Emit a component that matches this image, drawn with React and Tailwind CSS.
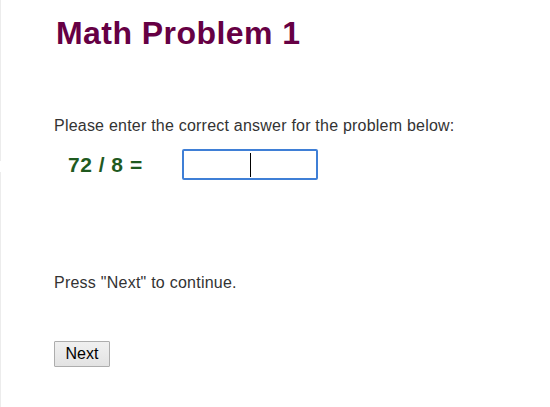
export default function App() {
  return (
    <div className="flex min-h-[407px] w-[550px] bg-white font-['Liberation_Sans',Arial,sans-serif]">
      <div className="flex w-px flex-col">
        <div className="h-[161px] bg-[#ececec]" />
        <div className="h-[11px]" />
        <div className="flex-1 bg-[#ececec]" />
      </div>
      <div className="flex flex-col pl-[53px]">
        <h1 className="mt-[15px] pl-[2px] text-[32px] leading-[37px] font-bold tracking-[0.45px] text-[#660044]">Math Problem 1</h1>
        <p className="mt-[65px] text-[16px] leading-[18px] tracking-[0.22px] text-[#333333]">
          Please enter the correct answer for the problem below:
        </p>
        <div className="mt-[14px] flex items-center">
          <span className="ml-[14px] w-[114px] text-[21px] leading-[24px] font-bold tracking-[0.5px] text-[#1f5a1f]">72 / 8 =</span>
          <div className="flex h-[31px] w-[136px] items-center justify-center rounded-[2px] border-2 border-[#3f7fd6] bg-white">
            <div className="h-[24px] w-px bg-black" />
          </div>
        </div>
        <p className="mt-[94px] text-[16px] leading-[18px] tracking-[0.24px] text-[#333333]">Press "Next" to continue.</p>
        <div className="mt-[49px]">
          <button className="h-[26px] w-[56px] rounded-[1px] border border-[#adadad] bg-gradient-to-b from-[#f0f0f0] to-[#e3e3e3] text-[16px] leading-[18px] text-black">
            Next
          </button>
        </div>
      </div>
    </div>
  );
}
